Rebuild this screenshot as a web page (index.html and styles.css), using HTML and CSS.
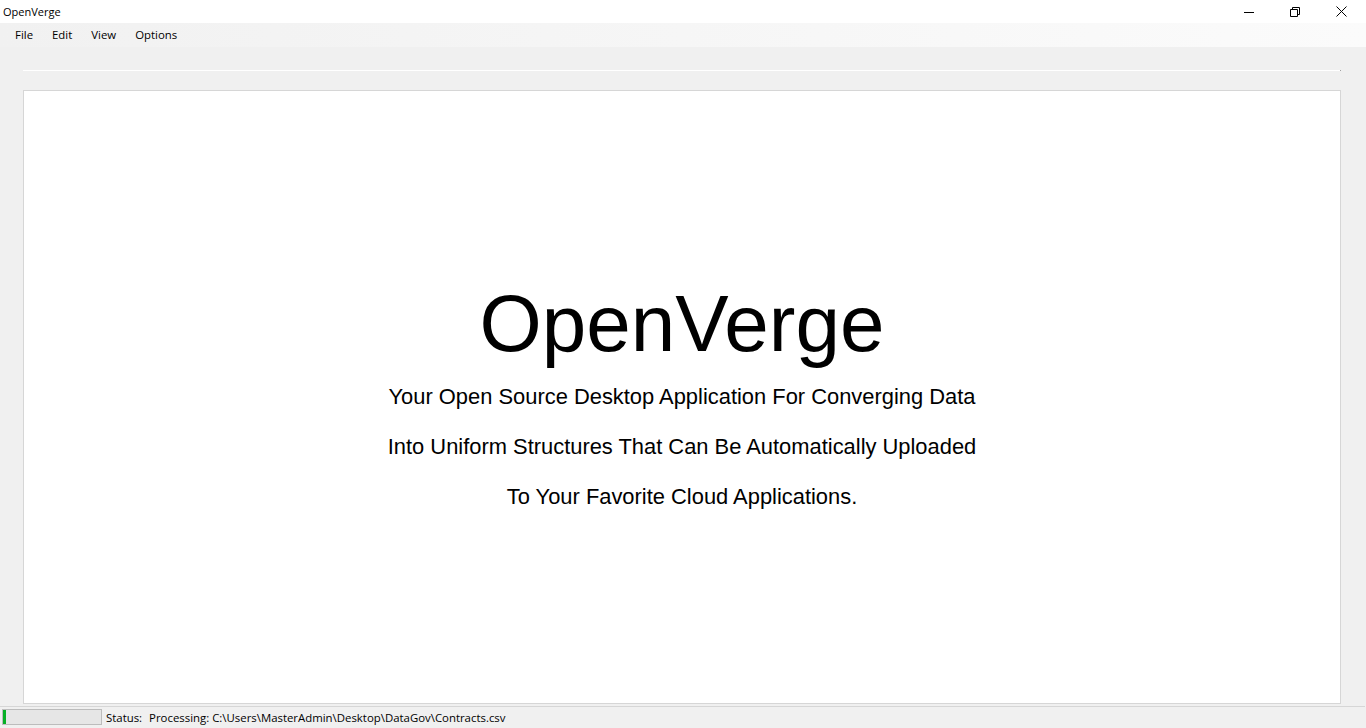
FILE: index.html
```html
<!DOCTYPE html>
<html lang="en">
<head>
<meta charset="utf-8">
<title>OpenVerge</title>
<link rel="stylesheet" href="styles.css">
</head>
<body>
<div class="window">
  <header class="titlebar">
    <span class="title">OpenVerge</span>
    <div class="controls">
      <span class="ctl">
        <svg width="10" height="10" viewBox="0 0 10 10"><path d="M0 5.5H10" stroke="#000" stroke-width="1"/></svg>
      </span>
      <span class="ctl">
        <svg width="10" height="10" viewBox="0 0 10 10" fill="none" stroke="#000" stroke-width="1"><path d="M0.5 2.5H7.5V9.5H0.5Z"/><path d="M2.5 2.5V0.5H9.5V7.5H7.5"/></svg>
      </span>
      <span class="ctl">
        <svg width="11" height="11" viewBox="0 0 11 11" fill="none" stroke="#000" stroke-width="1"><path d="M0.5 0.5L10.5 10.5M10.5 0.5L0.5 10.5"/></svg>
      </span>
    </div>
  </header>
  <nav class="menubar">
    <span class="menu-item">File</span>
    <span class="menu-item">Edit</span>
    <span class="menu-item">View</span>
    <span class="menu-item">Options</span>
  </nav>
  <div class="toolbar"><div class="rule"></div></div>
  <main class="panel">
    <h1 class="brand">OpenVerge</h1>
    <p class="tagline">Your Open Source Desktop Application For Converging Data</p>
    <p class="tagline">Into Uniform Structures That Can Be Automatically Uploaded</p>
    <p class="tagline">To Your Favorite Cloud Applications.</p>
  </main>
  <footer class="statusbar">
    <div class="progress"><div class="progress-fill" style="width:3%"></div></div>
    <span class="status-label">Status:</span>
    <span class="status-text">Processing: C:\Users\MasterAdmin\Desktop\DataGov\Contracts.csv</span>
  </footer>
</div>
</body>
</html>
```
FILE: styles.css
```css
html, body {
  margin: 0;
  padding: 0;
}
body {
  background: #f0f0f0;
  font-family: "Open Sans", "Noto Sans", sans-serif;
  font-size: 11.4px;
  color: #000;
}
.window {
  display: flex;
  flex-direction: column;
  height: 728px;
  overflow: hidden;
}
.titlebar {
  height: 23px;
  background: #fff;
  display: flex;
  align-items: center;
  justify-content: space-between;
  flex: none;
}
.title {
  padding-left: 3px;
  line-height: 23px;
  font-size: 11px;
}
.controls {
  display: flex;
  height: 23px;
  margin-right: 2px;
}
.ctl {
  width: 46px;
  height: 23px;
  display: flex;
  align-items: center;
  justify-content: center;
}
.ctl svg {
  display: block;
}
.menubar {
  height: 24px;
  flex: none;
  display: flex;
  align-items: center;
  padding-left: 6px;
  background: linear-gradient(to right, #f1f1f1, #fbfbfb);
}
.menu-item {
  padding: 0 9px;
  line-height: 24px;
}
.menu-item + .menu-item {
  margin-left: 1px;
}
.toolbar {
  height: 43px;
  flex: none;
  padding: 23px 25px 0 23px;
  box-sizing: border-box;
}
.rule {
  height: 1px;
  background: #fff;
  border-right: 1px solid #a0a0a0;
}
.panel {
  flex: 1;
  margin: 0 25px 0 23px;
  background: #fff;
  border: 1px solid #d6d6d6;
  display: flex;
  flex-direction: column;
  align-items: center;
  justify-content: center;
  padding-top: 11px;
  font-family: "Liberation Sans", Arial, sans-serif;
}
.brand {
  margin: 0 0 9px;
  font-weight: normal;
  font-size: 80px;
  line-height: 79px;
}
.tagline {
  margin: 0;
  font-size: 21.9px;
  line-height: 50px;
}
.statusbar {
  flex: none;
  height: 21px;
  margin-top: 2px;
  border-top: 1px solid #d6d6d6;
  margin-right: 1px;
  display: flex;
  align-items: center;
  padding-left: 2px;
  box-sizing: content-box;
}
.progress {
  width: 98px;
  height: 14px;
  border: 1px solid #bcbcbc;
  background: #e6e6e6;
  margin-right: 4px;
  margin-top: -2px;
}
.progress-fill {
  height: 100%;
  background: #06b025;
}
.status-label {
  margin-right: 7px;
}
```
